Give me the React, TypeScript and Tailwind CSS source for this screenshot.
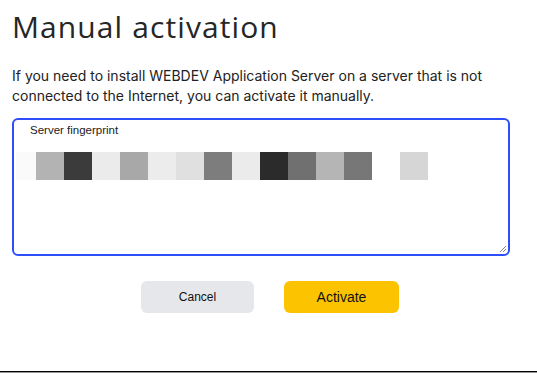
import React from "react";

const blocks: { w: number; c: string }[] = [
  { w: 20, c: "#fafafa" },
  { w: 28, c: "#b3b3b3" },
  { w: 28, c: "#3b3b3b" },
  { w: 28, c: "#ebebeb" },
  { w: 28, c: "#a8a8a8" },
  { w: 28, c: "#ececec" },
  { w: 28, c: "#e0e0e0" },
  { w: 28, c: "#7d7d7d" },
  { w: 28, c: "#ebebeb" },
  { w: 28, c: "#2b2b2b" },
  { w: 28, c: "#707070" },
  { w: 28, c: "#b5b5b5" },
  { w: 28, c: "#777777" },
  { w: 28, c: "#ffffff" },
  { w: 28, c: "#d6d6d6" },
];

export default function App() {
  return (
    <div className="w-[537px] h-[373px] bg-white overflow-hidden">
      <div className="h-[371px] border-b border-black flex flex-col px-3 box-content">
        <h1
          className="mt-[7px] text-[30px] leading-[40px] text-[#262626] tracking-[1.1px]"
          style={{ fontFamily: "'Open Sans', Lato, sans-serif", fontWeight: 400 }}
        >
          Manual activation
        </h1>
        <p
          className="mt-[19px] text-[14px] leading-[20px] text-[#222]"
          style={{ fontFamily: "Inter, sans-serif" }}
        >
          If you need to install WEBDEV Application Server on a server that is not connected to the Internet, you can activate it manually.
        </p>
        <div className="relative mt-[12px] w-[498px] h-[138px] border-2 border-[#2d4ef8] rounded-[6px]">
          <div
            className="absolute left-[16px] top-[3px] text-[11.5px] leading-[14px] text-[#222]"
            style={{ fontFamily: "'Liberation Sans', Arial, sans-serif" }}
          >
            Server fingerprint
          </div>
          <div className="absolute left-[2px] top-[32px] flex">
            {blocks.map((b, i) => (
              <div key={i} className="h-[28px]" style={{ width: b.w, backgroundColor: b.c }} />
            ))}
          </div>
          <svg className="absolute right-[1px] bottom-[1px]" width="8" height="8" viewBox="0 0 8 8">
            <line x1="1" y1="7" x2="7" y2="1" stroke="#888" strokeWidth="1" />
            <line x1="4" y1="7" x2="7" y2="4" stroke="#888" strokeWidth="1" />
          </svg>
        </div>
        <div className="mt-[25px] flex gap-[30px] pl-[129px]">
          <button
            className="w-[113px] h-[32px] rounded-[6px] bg-[#e5e7eb] text-[12px] text-[#111]"
            style={{ fontFamily: "'Liberation Sans', Arial, sans-serif" }}
          >
            Cancel
          </button>
          <button
            className="w-[115px] h-[32px] rounded-[6px] bg-[#fcc400] text-[14px] text-[#111]"
            style={{ fontFamily: "'Liberation Sans', Arial, sans-serif" }}
          >
            Activate
          </button>
        </div>
      </div>
      <div className="h-[1px] bg-[#9a9a9a]" />
    </div>
  );
}
